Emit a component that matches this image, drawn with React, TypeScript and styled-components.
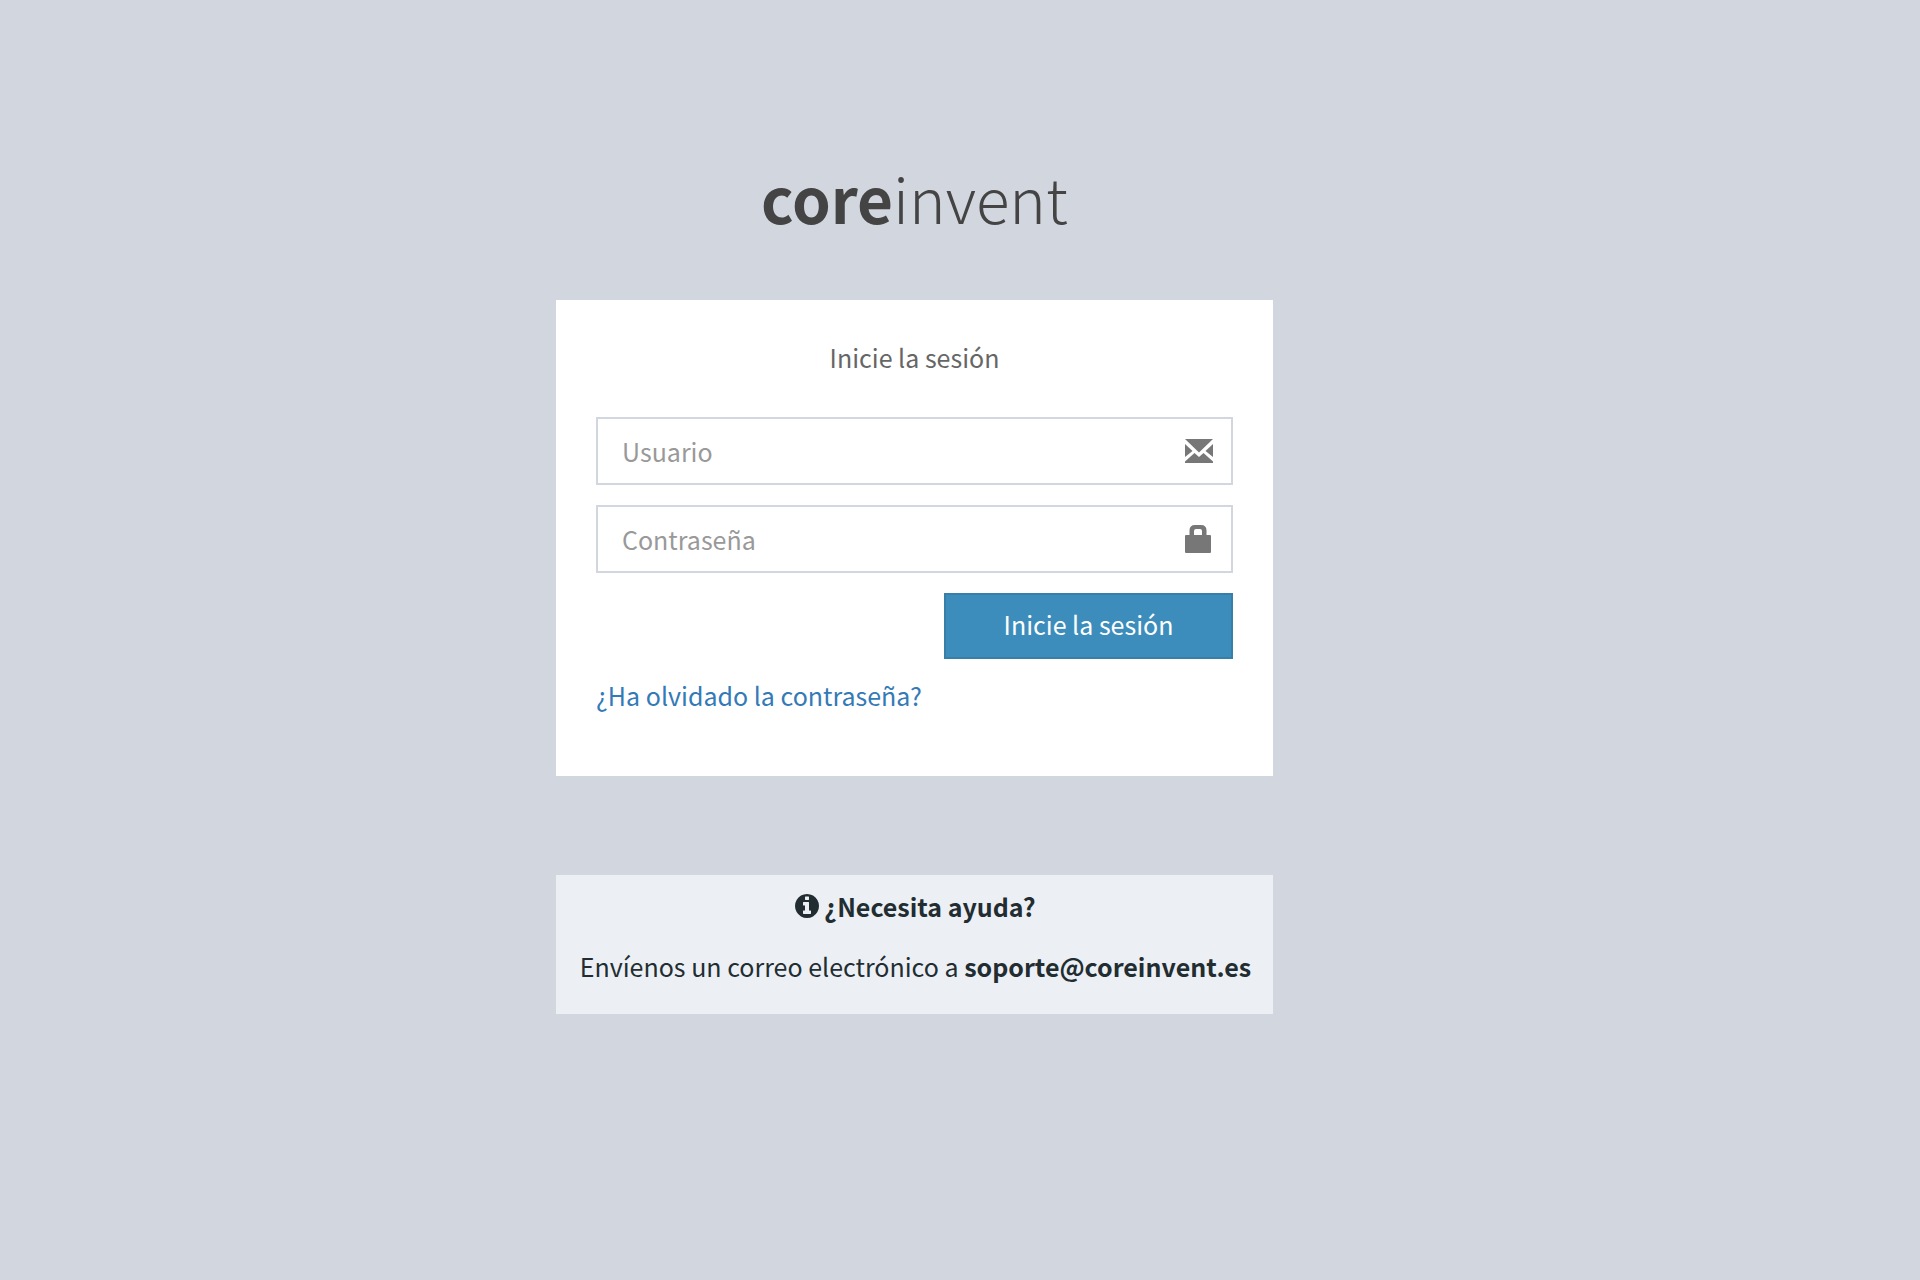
import React from "react";
import styled, { createGlobalStyle } from "styled-components";

const GlobalStyle = createGlobalStyle`
  *, *::before, *::after { box-sizing: border-box; }
  body {
    margin: 0;
    background: #d2d6de;
    color: #222d32;
    font-family: "Noto Sans CJK SC", "Open Sans", sans-serif;
    font-size: 25px;
    line-height: 40px;
  }
`;

const Page = styled.main`
  min-height: 100vh;
  padding: 151px 91px 40px 0;
  display: flex;
  flex-direction: column;
  align-items: center;
`;

const Logo = styled.h1`
  margin: 0 0 57px;
  color: #444;
  font-size: 62px;
  font-weight: 300;
  line-height: 92px;

  b { font-weight: 700; }
`;

const Card = styled.form`
  width: 100%;
  max-width: 717px;
  padding: 37px 40px 61px;
  background: #fff;
  color: #666;
`;

const Title = styled.p`
  margin: 0 0 40px;
  text-align: center;
`;

const Field = styled.label`
  display: flex;
  align-items: center;
  height: 68px;
  margin-bottom: 20px;
  padding: 0 17px 0 24px;
  border: 2px solid #d2d6de;
  background: #fff;
  color: #777;

  &:focus-within { border-color: #3c8dbc; }
`;

const TextInput = styled.input`
  flex: 1;
  min-width: 0;
  height: 40px;
  padding: 0;
  border: 0;
  outline: 0;
  background: transparent;
  color: #555;
  font: inherit;

  &::placeholder { color: #999; opacity: 1; }
`;

const FieldIcon = styled.svg`
  flex: none;
  width: 30px;
  height: 30px;
  fill: currentColor;
`;

const Actions = styled.div`
  display: flex;
  justify-content: flex-end;
  margin-bottom: 16px;
`;

const Submit = styled.button`
  width: 289px;
  height: 66px;
  padding: 0 0 4px;
  border: 2px solid #367fa9;
  background: #3c8dbc;
  color: #fff;
  font: inherit;
  cursor: pointer;

  &:hover { background: #367fa9; }
`;

const Link = styled.a`
  color: #337ab7;
  text-decoration: none;
`;

const Help = styled.section`
  width: 100%;
  max-width: 717px;
  margin-top: 99px;
  padding: 11px 8px 28px 10px;
  background: #ecf0f5;
  text-align: center;
`;

const HelpTitle = styled.h2`
  display: flex;
  align-items: center;
  justify-content: center;
  gap: 5px;
  margin: 0 0 20px;
  font-size: 25px;
  font-weight: 700;
`;

const HelpIcon = styled.svg`
  width: 24px;
  height: 24px;
  fill: currentColor;
`;

const HelpText = styled.p`
  margin: 0;
`;

function EnvelopeIcon() {
  return (
    <FieldIcon viewBox="0 0 30 30" aria-hidden="true">
      <path d="M1 3H29L15 16.500Z" />
      <path d="M1 8L8.500 15L1 21Z" />
      <path d="M29 8L21.500 15L29 21Z" />
      <path d="M1 27V25.500L10.500 17L15 21L19.500 17L29 25.500V27Z" />
    </FieldIcon>
  );
}

function LockIcon() {
  return (
    <FieldIcon viewBox="0 0 30 30" aria-hidden="true">
      <path
        fillRule="evenodd"
        d="M5.500 11V6.500Q5.500 1 11 1H17Q22.500 1 22.500 6.500V11H26Q27 11 27 12V28Q27 29 26 29H2Q1 29 1 28V12Q1 11 2 11ZM10 11H18V7Q18 5 16 5H12Q10 5 10 7Z"
      />
    </FieldIcon>
  );
}

function InfoIcon() {
  return (
    <HelpIcon viewBox="0 128 1536 1536" aria-hidden="true">
      <path d="M1024 1376v-160q0-14-9-23t-23-9h-96v-512q0-14-9-23t-23-9h-320q-14 0-23 9t-9 23v160q0 14 9 23t23 9h96v320h-96q-14 0-23 9t-9 23v160q0 14 9 23t23 9h448q14 0 23-9t9-23zm-128-896v-160q0-14-9-23t-23-9h-192q-14 0-23 9t-9 23v160q0 14 9 23t23 9h192q14 0 23-9t9-23zm640 416q0 209-103 385.500t-279.500 279.500-385.500 103-385.500-103-279.500-279.500-103-385.500 103-385.500 279.500-279.500 385.500-103 385.500 103 279.500 279.500 103 385.500z" />
    </HelpIcon>
  );
}

export default function App() {
  return (
    <>
      <GlobalStyle />
      <Page>
        <Logo>
          <b>core</b>invent
        </Logo>
        <Card onSubmit={(event: React.FormEvent) => event.preventDefault()}>
          <Title>Inicie la sesión</Title>
          <Field>
            <TextInput type="text" placeholder="Usuario" aria-label="Usuario" />
            <EnvelopeIcon />
          </Field>
          <Field>
            <TextInput type="password" placeholder="Contraseña" aria-label="Contraseña" />
            <LockIcon />
          </Field>
          <Actions>
            <Submit type="submit">Inicie la sesión</Submit>
          </Actions>
          <Link href="#">¿Ha olvidado la contraseña?</Link>
        </Card>
        <Help>
          <HelpTitle>
            <InfoIcon />
            ¿Necesita ayuda?
          </HelpTitle>
          <HelpText>
            Envíenos un correo electrónico a <b>soporte@coreinvent.es</b>
          </HelpText>
        </Help>
      </Page>
    </>
  );
}
